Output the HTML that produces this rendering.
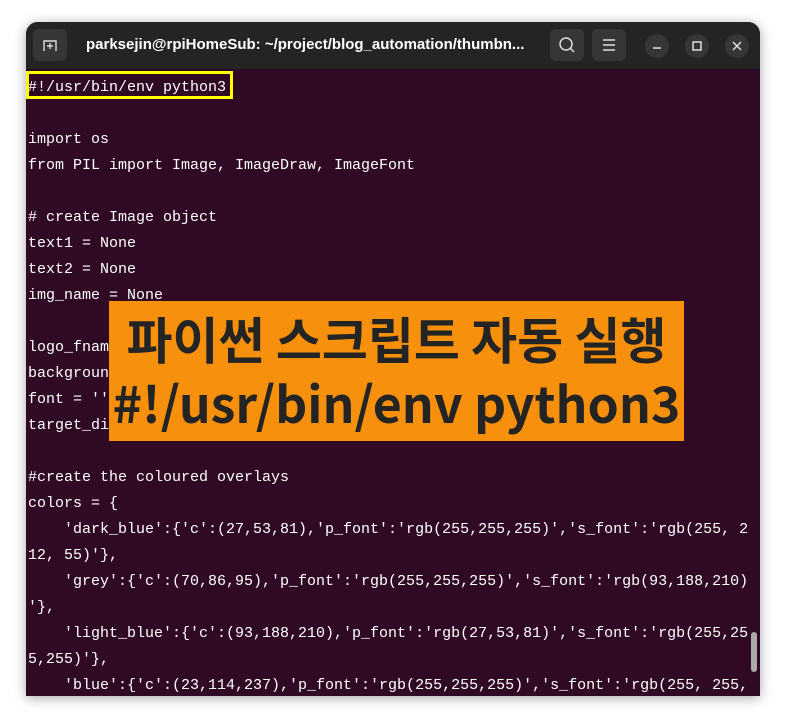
<!DOCTYPE html>
<html><head><meta charset="utf-8"><style>
body{margin:0;width:786px;height:725px;background:#fff;position:relative;overflow:hidden;font-family:"Liberation Sans",sans-serif}
.win{position:absolute;left:26px;top:22px;width:734px;height:674px;border-radius:12px 12px 0 0;background:#300a24;overflow:hidden;box-shadow:0 2px 12px rgba(0,0,0,.35)}
.tb{position:absolute;left:0;top:0;width:734px;height:47px;background:#242424}
.btn{position:absolute;top:7px;width:34px;height:32px;border-radius:6px;background:#363636}
.circ{position:absolute;top:12px;width:24px;height:24px;border-radius:50%;background:#363636}
.title{position:absolute;left:60px;top:14px;color:#fff;font-weight:bold;font-size:15px;white-space:nowrap}
pre{position:absolute;left:2px;top:53px;margin:0;font-family:"Liberation Mono",monospace;font-size:15px;line-height:26px;color:#fff}
.hl{position:absolute;left:0;top:49px;width:207px;height:28px;border:3px solid #ffff00;box-sizing:border-box}
.ob{position:absolute;left:83px;top:279px;width:575px;height:140px;background:#f7910d;color:#242424;font-family:"Noto Sans CJK KR",sans-serif;font-weight:bold;text-align:center;white-space:nowrap;overflow:hidden}
.sb{position:absolute;right:3px;top:610px;width:6px;height:40px;border-radius:3px;background:#aaa}
</style></head><body>
<div class="win">
<div class="tb">
<div class="btn" style="left:7px"><svg width="34" height="32"><path d="M11 22V12h12v10M17 14v6M14 17h6" stroke="#ddd" stroke-width="1.4" fill="none"/></svg></div>
<div class="title">parksejin@rpiHomeSub: ~/project/blog_automation/thumbn...</div>
<div class="btn" style="left:524px"><svg width="34" height="32"><circle cx="16" cy="15" r="6" stroke="#ddd" stroke-width="1.5" fill="none"/><path d="M20 19l4 4" stroke="#ddd" stroke-width="1.5"/></svg></div>
<div class="btn" style="left:566px"><svg width="34" height="32"><path d="M11 11h12M11 16h12M11 21h12" stroke="#ddd" stroke-width="1.4"/></svg></div>
<div class="circ" style="left:619px"><svg width="24" height="24"><path d="M8 14h8" stroke="#ddd" stroke-width="1.5"/></svg></div>
<div class="circ" style="left:659px"><svg width="24" height="24"><rect x="8" y="8" width="8" height="8" stroke="#ddd" stroke-width="1.5" fill="none"/></svg></div>
<div class="circ" style="left:699px"><svg width="24" height="24"><path d="M8 8l8 8M16 8l-8 8" stroke="#ddd" stroke-width="1.5"/></svg></div>
</div>
<pre>#!/usr/bin/env python3

import os
from PIL import Image, ImageDraw, ImageFont

# create Image object
text1 = None
text2 = None
img_name = None

logo_fname
background
font = ''
target_di

#create the coloured overlays
colors = {
    'dark_blue':{'c':(27,53,81),'p_font':'rgb(255,255,255)','s_font':'rgb(255, 2
12, 55)'},
    'grey':{'c':(70,86,95),'p_font':'rgb(255,255,255)','s_font':'rgb(93,188,210)
'},
    'light_blue':{'c':(93,188,210),'p_font':'rgb(27,53,81)','s_font':'rgb(255,25
5,255)'},
    'blue':{'c':(23,114,237),'p_font':'rgb(255,255,255)','s_font':'rgb(255, 255,</pre>
<div class="hl"></div>
<div class="ob"><div style="font-size:50px;line-height:50px;margin-top:12px">파이썬 스크립트 자동 실행</div><div style="font-size:50px;line-height:56px;margin-top:11px">#!/usr/bin/env python3</div></div>
<div class="sb"></div>
</div>
</body></html>
